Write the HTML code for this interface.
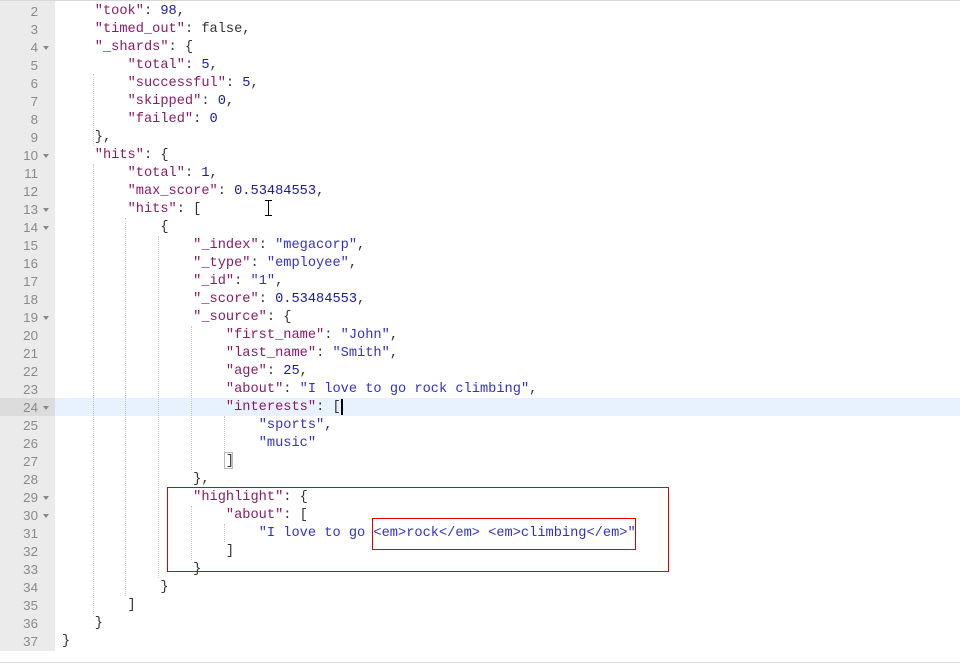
<!DOCTYPE html>
<html><head><meta charset="utf-8"><style>
html,body{margin:0;padding:0;width:960px;height:672px;background:#fff;overflow:hidden}
#ed{position:absolute;left:0;top:0;width:960px;height:650px;border-top:1px solid #d8d8d8;}
#gut{position:absolute;left:0;top:0;width:55px;height:650px;background:#ebebeb}
.ln{position:absolute;left:0;width:38px;text-align:right;font:13.33px/18px "Liberation Sans",sans-serif;color:#8a8a8a;}
.ar{position:absolute;left:43px;width:0;height:0;border-left:3px solid transparent;border-right:3px solid transparent;border-top:4px solid #888}
.cl{position:absolute;left:62px;white-space:pre;font:13.67px/18px "Liberation Mono",monospace;color:#333}
.k{color:#8a1a66}.s{color:#3232c8}.n{color:#1a1aa6}
.g{position:absolute;width:0;border-left:1px dotted #c8c8c8}
.box{position:absolute;border:1px solid #e00000}
</style></head><body>
<div id="ed">
<div id="gut"></div>
<div style="position:absolute;left:0;top:397px;width:55px;height:18px;background:#dcdcdc"></div>
<div style="position:absolute;left:55px;top:397px;width:905px;height:18px;background:#e8f2fe"></div>
<div class="g" style="left:93px;top:73px;height:72px"></div>
<div class="g" style="left:93px;top:163px;height:450px"></div>
<div class="g" style="left:125px;top:217px;height:378px"></div>
<div class="g" style="left:158px;top:235px;height:342px"></div>
<div class="g" style="left:191px;top:325px;height:144px"></div>
<div class="g" style="left:191px;top:505px;height:54px"></div>
<div class="g" style="left:224px;top:415px;height:36px"></div>
<div class="g" style="left:224px;top:523px;height:18px"></div>
<div id="lines"></div>
<div style="position:absolute;left:224px;top:451px;width:9px;height:17px;border:1px solid #bbb;box-sizing:border-box"></div>
<div style="position:absolute;left:341px;top:398px;width:2px;height:16px;background:#000"></div>
<div style="position:absolute;left:265px;top:199px;width:7px;height:16px">
<div style="position:absolute;left:3px;top:0;width:1px;height:16px;background:#000"></div>
<div style="position:absolute;left:0;top:0;width:7px;height:1px;background:#000"></div>
<div style="position:absolute;left:0;top:15px;width:7px;height:1px;background:#000"></div></div>
<div class="box" style="left:167px;top:486px;width:500px;height:83px"></div>
<div class="box" style="left:372px;top:517px;width:262px;height:30px"></div>
</div>
<div style="position:absolute;left:0;top:662px;width:960px;height:1px;background:#d8d8d8"></div>
<script>
var L=[
[2,'    <span class="k">"took"</span>: <span class="n">98</span>,'],
[3,'    <span class="k">"timed_out"</span>: false,'],
[4,'    <span class="k">"_shards"</span>: {',1],
[5,'        <span class="k">"total"</span>: <span class="n">5</span>,'],
[6,'        <span class="k">"successful"</span>: <span class="n">5</span>,'],
[7,'        <span class="k">"skipped"</span>: <span class="n">0</span>,'],
[8,'        <span class="k">"failed"</span>: <span class="n">0</span>'],
[9,'    },'],
[10,'    <span class="k">"hits"</span>: {',1],
[11,'        <span class="k">"total"</span>: <span class="n">1</span>,'],
[12,'        <span class="k">"max_score"</span>: <span class="n">0.53484553</span>,'],
[13,'        <span class="k">"hits"</span>: [',1],
[14,'            {',1],
[15,'                <span class="k">"_index"</span>: <span class="s">"megacorp"</span>,'],
[16,'                <span class="k">"_type"</span>: <span class="s">"employee"</span>,'],
[17,'                <span class="k">"_id"</span>: <span class="s">"1"</span>,'],
[18,'                <span class="k">"_score"</span>: <span class="n">0.53484553</span>,'],
[19,'                <span class="k">"_source"</span>: {',1],
[20,'                    <span class="k">"first_name"</span>: <span class="s">"John"</span>,'],
[21,'                    <span class="k">"last_name"</span>: <span class="s">"Smith"</span>,'],
[22,'                    <span class="k">"age"</span>: <span class="n">25</span>,'],
[23,'                    <span class="k">"about"</span>: <span class="s">"I love to go rock climbing"</span>,'],
[24,'                    <span class="k">"interests"</span>: [',1],
[25,'                        <span class="s">"sports"</span>,'],
[26,'                        <span class="s">"music"</span>'],
[27,'                    ]'],
[28,'                },'],
[29,'                <span class="k">"highlight"</span>: {',1],
[30,'                    <span class="k">"about"</span>: [',1],
[31,'                        <span class="s">"I love to go &lt;em&gt;rock&lt;/em&gt; &lt;em&gt;climbing&lt;/em&gt;"</span>'],
[32,'                    ]'],
[33,'                }'],
[34,'            }'],
[35,'        ]'],
[36,'    }'],
[37,'}']];
var h='';
L.forEach(function(l){var t=2+(l[0]-2)*18;
h+='<div class="ln" style="top:'+t+'px">'+l[0]+'</div>';
if(l[2])h+='<div class="ar" style="top:'+(t+7)+'px"></div>';
h+='<div class="cl" style="top:'+t+'px">'+l[1]+'</div>';});
document.getElementById('lines').innerHTML=h;
</script>
</body></html>
